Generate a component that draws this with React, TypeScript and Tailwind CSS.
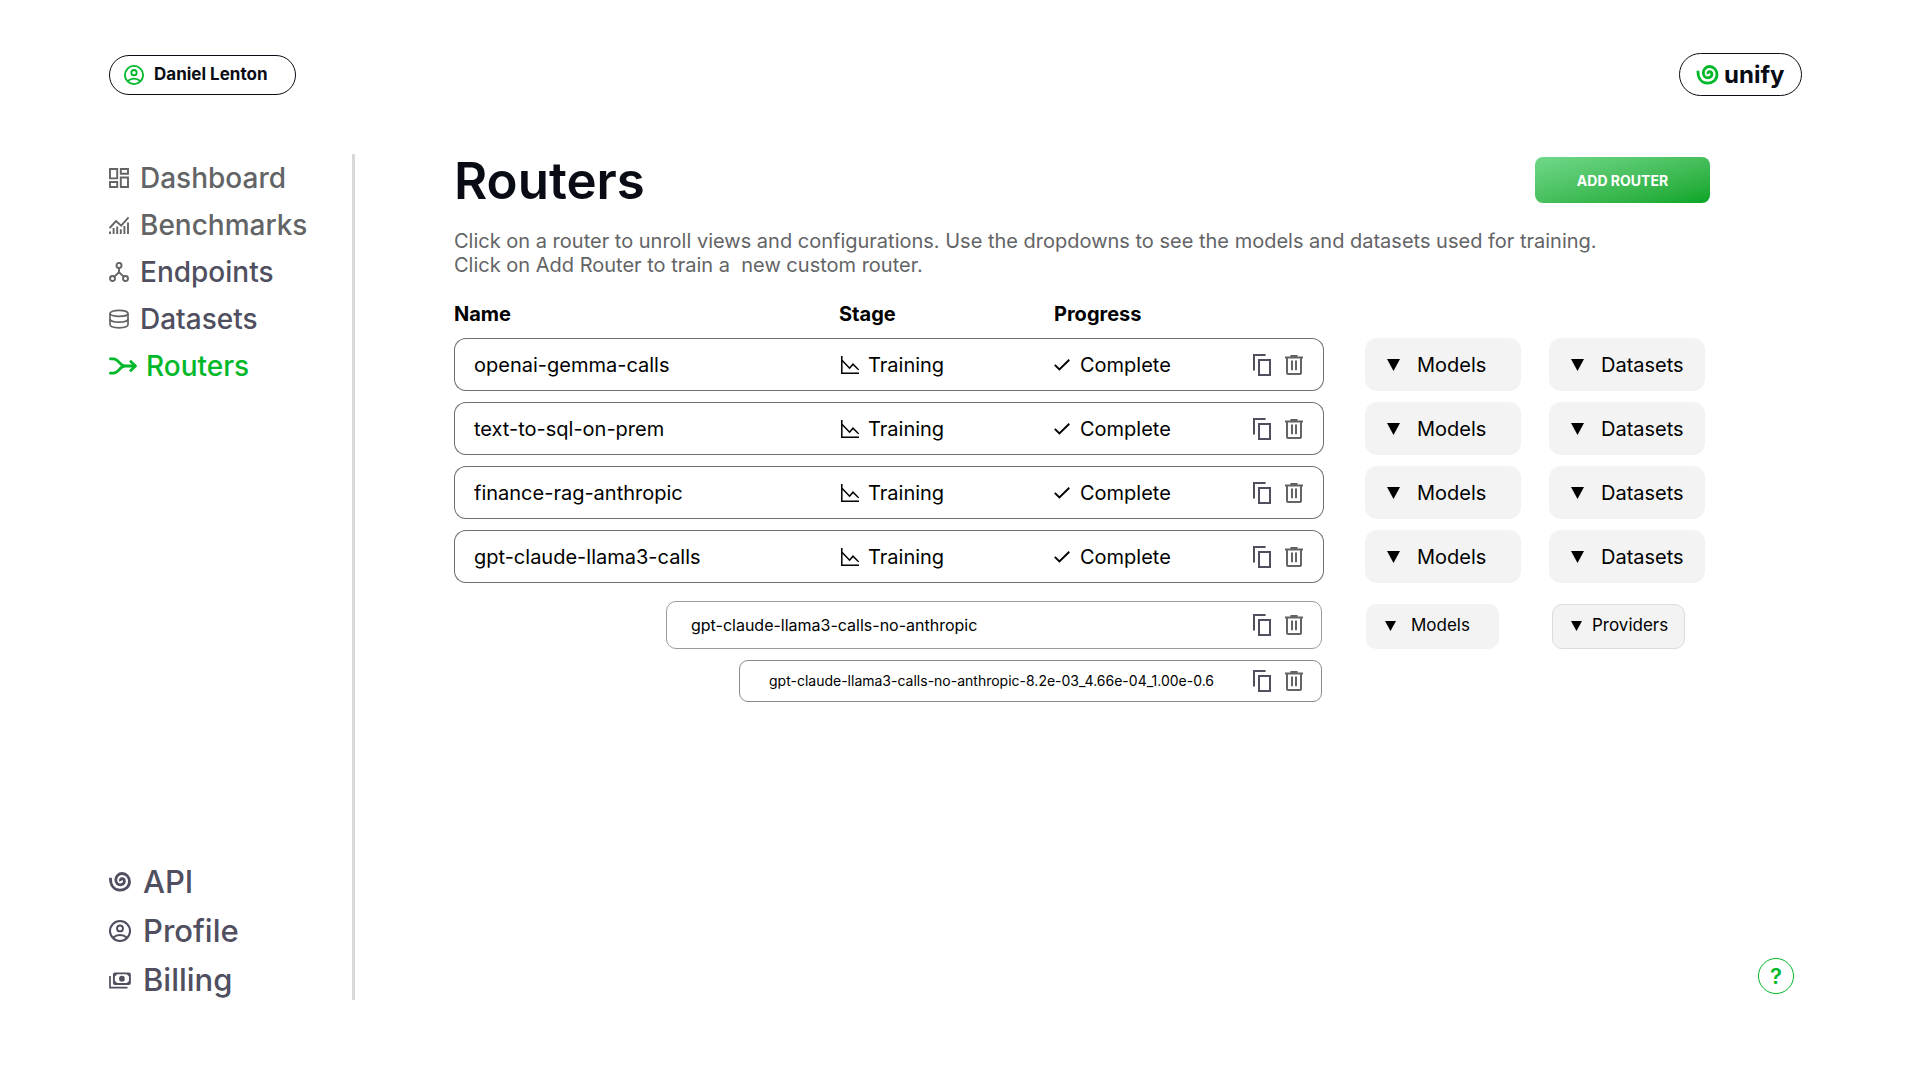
import React from "react";

type IconProps = { className?: string };

function Spiral({ className }: IconProps) {
  return (
    <svg viewBox="0 0 22 20" fill="none" stroke="currentColor" strokeWidth="2.8" className={className} aria-hidden="true">
      <path d="M1.4 5.7C1.4 13.2 5 18.2 11 18.2c5.500 0 9.500-3.700 9.500-8.600 0-4.600-3.300-8.100-7.300-8.100-3.800 0-6.400 3-6.400 6.300 0 3 2.100 5 4.600 5 2.400 0 4-1.600 4-3.500 0-1.700-1.200-2.700-2.400-2.700-1.300 0-1.900 1.200-1.500 2.600" />
    </svg>
  );
}

function UserCircle({ className }: IconProps) {
  return (
    <svg viewBox="0 0 22 22" fill="none" stroke="currentColor" strokeWidth="2" className={className} aria-hidden="true">
      <circle cx="11" cy="11" r="10" />
      <circle cx="11" cy="8.4" r="2.900" />
      <path d="M4.200 17.600C6.200 15.800 8.500 15 11 15s4.800.8 6.800 2.600" />
    </svg>
  );
}

function DashboardIcon({ className }: IconProps) {
  return (
    <svg viewBox="0 0 20 20" fill="none" stroke="currentColor" strokeWidth="1.900" className={className} aria-hidden="true">
      <path d="M1 1h7.200v9.400H1zM11.800 1H19v4.800h-7.200zM1 14h7.200v5H1zM11.800 9.500H19V19h-7.200z" />
    </svg>
  );
}

function BenchmarksIcon({ className }: IconProps) {
  return (
    <svg viewBox="0 0 20 20" fill="none" stroke="currentColor" strokeWidth="1.900" className={className} aria-hidden="true">
      <path d="M.6 13 7 6l5.200 4.600L19.600 2.400" />
      <path d="M1 19v-2.600M4.600 19v-6M8.200 19v-7.400M11.800 19v-4.800M15.400 19v-8M19 19V7.400" />
    </svg>
  );
}

function EndpointsIcon({ className }: IconProps) {
  return (
    <svg viewBox="0 0 20 20" fill="none" stroke="currentColor" strokeWidth="1.900" className={className} aria-hidden="true">
      <circle cx="10" cy="3.400" r="2.500" />
      <circle cx="3.500" cy="16.500" r="2.500" />
      <circle cx="16.500" cy="16.500" r="2.500" />
      <path d="M10 6v4.600M10 10.200l-4.700 4.400M10 10.200l4.700 4.400" />
    </svg>
  );
}

function DatasetsIcon({ className }: IconProps) {
  return (
    <svg viewBox="0 0 20 20" fill="none" stroke="currentColor" strokeWidth="1.700" className={className} aria-hidden="true">
      <ellipse cx="10" cy="4.400" rx="9" ry="3" />
      <path d="M1 4.400v11.200C1 17.600 5 18.800 10 18.800s9-1.200 9-3.200V4.400" />
      <path d="M1 10c0 1.800 4 3.200 9 3.200s9-1.400 9-3.200" />
    </svg>
  );
}

function RoutersIcon({ className }: IconProps) {
  return (
    <svg viewBox="0 0 28 18" fill="none" stroke="currentColor" strokeWidth="2.800" strokeLinecap="round" strokeLinejoin="round" className={className} aria-hidden="true">
      <path d="M1.400 1.800h3c5.400 0 6.200 7.200 11.600 7.200M1.400 16.200h3C9.800 16.200 10.600 9 16 9h10" />
      <path d="m21.800 4.600 4.600 4.400-4.600 4.400" />
    </svg>
  );
}

function BillingIcon({ className }: IconProps) {
  return (
    <svg viewBox="0 0 22 17" fill="none" stroke="currentColor" className={className} aria-hidden="true">
      <path strokeWidth="1.700" d="M1 4v11.600h17.500" />
      <rect strokeWidth="1.900" x="4.900" y="1.400" width="16" height="10.600" rx="1" />
      <circle cx="12.900" cy="6.700" r="2.900" fill="currentColor" stroke="none" />
      <path strokeWidth="1.400" d="M8 1.600 5.200 4.200M18 1.600l2.800 2.600M8 11.800 5.200 9.200M18 11.800l2.800-2.600" />
    </svg>
  );
}

function ChartIcon({ className }: IconProps) {
  return (
    <svg viewBox="0 0 18 18" fill="none" stroke="currentColor" strokeWidth="1.500" className={className} aria-hidden="true">
      <path d="M.8 0v17.200H18" />
      <path d="m1 4.200 7.600 8 3.400-4L17.600 13.800" />
    </svg>
  );
}

function CheckIcon({ className }: IconProps) {
  return (
    <svg viewBox="0 0 16 12" fill="none" stroke="currentColor" strokeWidth="1.900" className={className} aria-hidden="true">
      <path d="m.8 5.800 4.600 4.600L15.300.8" />
    </svg>
  );
}

function CopyIcon() {
  return (
    <svg viewBox="0 0 18 22" fill="none" stroke="#504f60" strokeWidth="2" className="h-[22px] w-[18px]" aria-hidden="true">
      <path d="M1 16.400V1h11.600" />
      <path d="M6 6h11v15H6z" />
    </svg>
  );
}

function TrashIcon() {
  return (
    <svg viewBox="0 0 18 20" fill="none" stroke="#636466" strokeWidth="2" className="h-5 w-[18px]" aria-hidden="true">
      <path d="M0 2.500h18M5.400 1h7.200" />
      <path d="M2 3v15c0 .700.400 1 1 1h12c.600 0 1-.300 1-1V3" />
      <path d="M7 5.600v9.600M11 5.600v9.600" />
    </svg>
  );
}

function RowActions({ name }: { name: string }) {
  return (
    <div className="flex shrink-0 items-center gap-[14px]">
      <button type="button" aria-label={`Copy ${name}`}>
        <CopyIcon />
      </button>
      <button type="button" aria-label={`Delete ${name}`}>
        <TrashIcon />
      </button>
    </div>
  );
}

function Dropdown({ label, router }: { label: string; router: string }) {
  return (
    <div className="relative">
      <svg viewBox="0 0 13 12" className="pointer-events-none absolute top-1/2 left-[22px] h-3 w-[13px] -translate-y-1/2" aria-hidden="true">
        <path d="M0 0h13L6.500 12z" />
      </svg>
      <select aria-label={`${label} of ${router}`} className="h-[53px] w-full appearance-none rounded-xl bg-[#f3f3f3] pl-[52px] text-xl">
        <option>{label}</option>
      </select>
    </div>
  );
}

function SmallDropdown({ label, router, outlined }: { label: string; router: string; outlined?: boolean }) {
  return (
    <div className="relative w-[133px]">
      <svg viewBox="0 0 11 10" className="pointer-events-none absolute top-1/2 left-[19px] h-[10px] w-[11px] -translate-y-1/2" aria-hidden="true">
        <path d="M0 0h11L5.500 10z" />
      </svg>
      <select
        aria-label={`${label} of ${router}`}
        className={
          outlined
            ? "h-[45px] w-full appearance-none rounded-[10px] border border-[#dcdcdc] bg-[#f3f3f3] pl-[39px] text-[17px]"
            : "h-[45px] w-full appearance-none rounded-[10px] bg-[#f3f3f3] pl-[45px] text-[17px]"
        }
      >
        <option>{label}</option>
      </select>
    </div>
  );
}

const primaryNav = [
  { label: "Dashboard", Icon: DashboardIcon, tone: "text-[#636466]" },
  { label: "Benchmarks", Icon: BenchmarksIcon, tone: "text-[#636466]" },
  { label: "Endpoints", Icon: EndpointsIcon, tone: "text-[#504f60]" },
  { label: "Datasets", Icon: DatasetsIcon, tone: "text-[#504f60]" },
];

const secondaryNav = [
  { label: "API", Icon: Spiral, size: "h-5 w-[22px]" },
  { label: "Profile", Icon: UserCircle, size: "h-[22px] w-[22px]" },
  { label: "Billing", Icon: BillingIcon, size: "h-[17px] w-[22px]" },
];

const routers = ["openai-gemma-calls", "text-to-sql-on-prem", "finance-rag-anthropic", "gpt-claude-llama3-calls"];
const view = "gpt-claude-llama3-calls-no-anthropic";
const configuration = "gpt-claude-llama3-calls-no-anthropic-8.2e-03_4.66e-04_1.00e-0.6";

export default function App() {
  return (
    <div className="flex min-h-screen flex-col bg-white pt-[53px] pr-[118px] pb-20 pl-[109px] font-['Inter',sans-serif] text-black">
      <header className="flex h-[43px] items-center justify-between">
        <button type="button" className="flex h-10 w-[187px] items-center gap-[10px] rounded-full border border-[#090c14] pl-[14px] text-[17px] font-bold text-[#090c14]">
          <UserCircle className="h-5 w-5 text-[#00b82a]" />
          Daniel Lenton
        </button>
        <a href="#home" className="flex h-[43px] w-[123px] items-center gap-[5px] rounded-full border border-[#090c14] pl-4 text-2xl font-bold text-[#090c14]">
          <Spiral className="h-5 w-[23px] text-[#00b82a]" />
          unify
        </a>
      </header>

      <div className="mt-[58px] flex flex-1">
        <aside className="flex w-[246px] shrink-0 flex-col justify-between border-r-3 border-[#d9d9d9] font-medium">
          <nav aria-label="Main" className="flex flex-col gap-[7px] pt-1 text-[28px]">
            {primaryNav.map(({ label, Icon, tone }) => (
              <a key={label} href={`#${label.toLowerCase()}`} className={`flex h-10 items-center gap-[11px] ${tone}`}>
                <Icon className="h-5 w-5 text-[#636466]" />
                {label}
              </a>
            ))}
            <a href="#routers" aria-current="page" className="flex h-10 items-center gap-[9px] text-[#00b82a]">
              <RoutersIcon className="h-[18px] w-7" />
              Routers
            </a>
          </nav>
          <nav aria-label="Account" className="flex flex-col gap-[9px] text-[31px] text-[#504f60]">
            {secondaryNav.map(({ label, Icon, size }) => (
              <a key={label} href={`#${label.toLowerCase()}`} className="flex h-10 items-center gap-3">
                <Icon className={size} />
                {label}
              </a>
            ))}
          </nav>
        </aside>

        <main className="min-w-0 flex-1 pl-[99px]">
          <div className="flex items-start justify-between">
            <h1 className="text-[51px] leading-[54px] font-semibold text-[#090c14]">Routers</h1>
            <button type="button" className="mt-[3px] h-[46px] w-[175px] rounded-lg bg-linear-to-br from-[#6fd98a] to-[#00a524] text-[14px] font-bold text-white">
              ADD ROUTER
            </button>
          </div>
          <p className="mt-[21px] text-xl leading-6 text-[#636466]">
            Click on a router to unroll views and configurations. Use the dropdowns to see the models and datasets used for training.
            <br />
            Click on Add Router to train a &nbsp;new custom router.
          </p>

          <div className="pr-[5px]">
            <table className="mt-[13px] w-full table-fixed border-separate border-spacing-x-0 border-spacing-y-[11px]">
              <colgroup>
                <col />
                <col className="w-[215px]" />
                <col className="w-[192px]" />
                <col className="w-[78px]" />
                <col className="w-[197px]" />
                <col className="w-[184px]" />
              </colgroup>
              <thead>
                <tr className="h-[26px] text-left text-xl leading-[26px]">
                  <th scope="col" className="p-0 font-bold">Name</th>
                  <th scope="col" className="p-0 font-bold">Stage</th>
                  <th scope="col" className="p-0 font-bold">Progress</th>
                  <td />
                  <td />
                  <td />
                </tr>
              </thead>
              <tbody className="text-xl">
                {routers.map((name) => (
                  <tr key={name} className="h-[53px]">
                    <td className="rounded-l-xl border-y border-l border-[#6f6f73] p-0 pl-[19px]">
                      <button type="button" className="block">{name}</button>
                    </td>
                    <td className="border-y border-[#6f6f73] p-0 pl-[2px]">
                      <span className="flex items-center gap-[9px]">
                        <ChartIcon className="h-[18px] w-[18px]" />
                        Training
                      </span>
                    </td>
                    <td className="border-y border-[#6f6f73] p-0">
                      <span className="flex items-center gap-[10px]">
                        <CheckIcon className="h-3 w-4" />
                        Complete
                      </span>
                    </td>
                    <td className="rounded-r-xl border-y border-r border-[#6f6f73] p-0 pr-5">
                      <div className="flex justify-end">
                        <RowActions name={name} />
                      </div>
                    </td>
                    <td className="p-0 pl-[41px]">
                      <Dropdown label="Models" router={name} />
                    </td>
                    <td className="p-0 pl-7">
                      <Dropdown label="Datasets" router={name} />
                    </td>
                  </tr>
                ))}
                <tr>
                  <td colSpan={4} className="p-0 pt-[7px] pr-[2px] pl-[212px]">
                    <div className="flex h-12 items-center justify-between rounded-[10px] border border-[#9a9a9c] pr-[18px] pl-6">
                      <button type="button" className="text-base">{view}</button>
                      <RowActions name={view} />
                    </div>
                  </td>
                  <td className="p-0 pt-[9px] pl-[42px]">
                    <SmallDropdown label="Models" router={view} />
                  </td>
                  <td className="p-0 pt-[9px] pl-[31px]">
                    <SmallDropdown label="Providers" router={view} outlined />
                  </td>
                </tr>
                <tr>
                  <td colSpan={4} className="p-0 pr-[2px] pl-[285px]">
                    <div className="flex h-[42px] items-center justify-between rounded-[9px] border border-[#8a8a8d] pr-[18px] pl-[29px]">
                      <button type="button" className="text-sm">{configuration}</button>
                      <RowActions name={configuration} />
                    </div>
                  </td>
                  <td />
                  <td />
                </tr>
              </tbody>
            </table>
          </div>
        </main>

        <button type="button" aria-label="Help" className="mr-2 mb-[6px] ml-12 h-9 w-9 shrink-0 self-end rounded-full border border-[#00b82a] text-[22px] leading-none font-semibold text-[#00b82a]">
          ?
        </button>
      </div>
    </div>
  );
}
